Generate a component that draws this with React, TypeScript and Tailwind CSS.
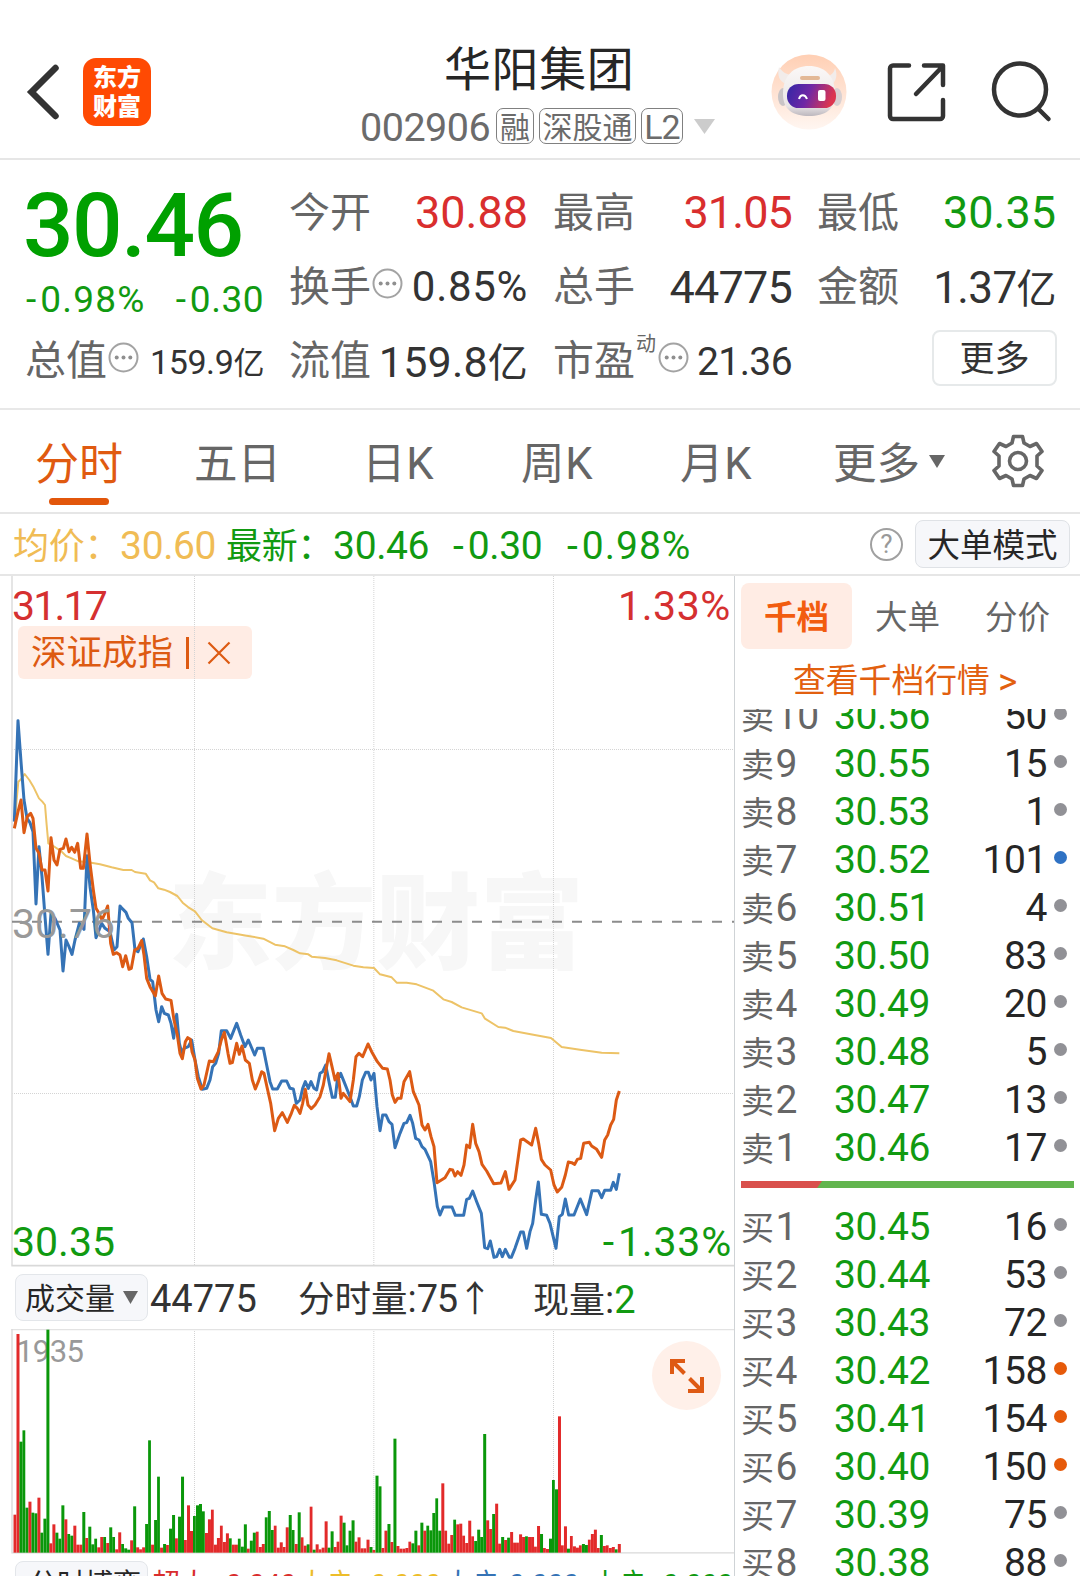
import type { ReactNode } from "react";

// Price traces, in thirds of a pixel. Each one is stored in two spans with their own origin.
const AVG_OPEN =
  "45,400 50,330 55,275 63,268 74,252 88,270 100,290 117,325 127,335 135,345 140,405 145,460 160,468 185,485 198,498 215,505 235,514 265,517 300,523 335,532 370,540 395,540 405,546 437,551 450,571 462,577 475,595 492,599 510,606 532,618 548,638 565,652 585,664 605,690 637,715 680,727 740,737 790,746 825,764 855,769 880,780";
const AVG_REST =
  "0,220 25,223 35,230 75,234 110,241 160,257 190,262 222,264 240,283 275,292 290,308 320,308 350,313 400,332 430,358 455,366 485,382 545,400 555,416 595,441 615,443 640,453 700,464 753,474 785,501 840,509 905,518 958,520";
const STOCK_OPEN =
  "43,395 54,92 63,215 72,330 81,385 90,398 99,425 108,642 117,470 126,560 135,680 144,793 153,670 165,685 180,720 189,843 198,750 207,770 216,793 225,750 238,700 252,718 261,497 270,590 280,660 288,743 305,700 315,715 330,725 342,780 351,770 360,648 367,656 378,667 385,685 396,698 405,780 414,785 430,747 440,800 450,868 458,875 468,960 476,995 485,950 493,970 505,975 513,1000 521,1045 530,973 538,1060 547,1095 552,1075 565,1070 575,1050 585,1110 595,1160 607,1198 620,1195 630,1170 638,1130 647,1120 656,1090 664,1022 680,1022 692,1045 700,1025 710,1000 722,1035 735,1070 745,1050 764,1095 772,1075 790,1075 800,1125 810,1175 818,1197 832,1197 845,1173 860,1173 870,1195 880,1197 889,1240";
const STOCK_REST =
  "0,660 8,625 16,605 25,625 33,605 42,625 50,630 60,580 68,575 77,555 88,610 97,652 106,652 112,600 122,580 132,605 142,630 150,650 160,678 170,678 178,650 187,600 197,577 205,577 213,600 222,580 231,680 240,752 248,705 258,705 267,725 276,733 285,803 300,760 312,730 320,728 330,706 338,730 347,775 357,780 366,800 375,808 392,845 402,905 412,980 420,1005 430,981 456,981 466,1006 491,1006 500,958 508,955 518,933 530,965 544,1000 554,1103 563,1106 571,1083 582,1132 590,1130 599,1108 607,1130 616,1108 628,1132 634,1132 645,1105 662,1056 670,1056 680,1105 690,1055 698,1030 707,960 715,906 724,1003 740,1006 750,1030 768,1105 778,1010 787,1003 796,957 806,1005 822,1005 841,957 860,1004 876,932 895,932 905,953 914,931 932,931 940,907 949,928 958,880";
const INDEX_OPEN =
  "43,415 54,365 63,330 72,428 82,380 92,370 99,385 108,475 117,490 126,540 135,540 144,603 153,443 162,510 171,525 180,478 190,475 198,447 207,485 215,472 224,487 233,460 242,535 250,535 261,432 270,520 280,600 288,655 297,670 306,690 314,672 323,648 332,760 340,793 350,788 360,795 368,830 377,797 387,838 394,835 404,780 414,775 425,752 432,795 440,865 450,890 466,918 476,858 486,910 497,927 513,931 522,990 532,1035 540,1090 547,1106 556,1055 563,1043 571,1048 576,1085 585,1110 592,1165 603,1197 612,1185 628,1113 640,1115 655,1085 664,1050 673,1027 684,1090 690,1120 697,1118 710,1060 718,1093 726,1068 736,1110 748,1120 757,1170 766,1197 775,1175 785,1145 792,1150 803,1200 812,1240 824,1322 835,1285 847,1268 862,1297 874,1270 883,1246 892,1255";
const INDEX_REST =
  "0,700 8,670 16,628 24,675 34,686 45,675 60,650 70,615 78,570 87,521 96,560 105,600 114,580 123,655 130,640 150,665 160,600 168,530 177,520 188,530 204,492 215,515 232,545 248,565 262,567 270,600 277,645 285,667 293,655 303,655 312,605 329,575 340,635 357,675 366,735 375,750 384,733 393,770 402,800 411,908 435,893 450,868 458,870 465,888 473,875 483,886 492,855 500,795 509,803 518,733 527,790 537,815 546,853 560,873 581,911 603,909 616,875 627,928 645,900 655,830 662,780 670,777 695,795 707,745 716,790 724,838 735,855 752,870 762,915 772,936 785,922 796,885 805,846 815,848 824,853 832,838 842,835 851,790 868,787 875,798 890,808 905,832 914,780 923,765 932,735 941,718 949,660 958,633";

// One entry a minute: direction, then the top edge of the bar.
const VOLUME =
  "r764 r222 g545 g511 g743 r725 g758 g760 r713 g818 g776 g209 r850 r793 g818 g836 g736 r778 g822 g827 r797 r854 r854 g756 r834 g800 g853 g836 r862 r831 g831 r849 g802 g831 r868 r817 g852 g865 g869 r841 g739 r862 r868 r862 g792 g541 r854 g780 g650 r863 g852 r855 g806 g765 r835 g770 g650 r840 r736 r813 g768 g736 g732 g754 r819 r778 r749 r854 r834 r797 r846 r820 g835 r854 r854 g836 g860 g793 r866 g842 g818 r815 r861 r852 g772 g753 g810 r797 r863 r847 r861 r802 g765 g810 r852 g757 r832 r857 g853 r740 g869 r853 r868 r863 r784 g863 g814 r861 r845 r767 g788 g856 g812 g781 r845 r832 r865 r865 r839 g861 r870 g647 g679 r864 r812 g792 r846 g536 r858 r866 r866 r864 r845 g850 g812 r856 g788 r812 g797 g811 g759 g715 g812 r670 r812 r851 r825 g779 r793 r791 r827 r849 r782 r829 g843 g809 g831 g522 r781 r807 g762 r731 r851 g831 r840 g833 r816 r848 r848 r823 r831 g829 r831 r831 r860 r798 g822 r864 r867 g836 g660 g688 r469 r856 r799 g866 r828 r859 r863 r856 g852 g855 r839 r822 r809 r864 g825 r858 r856 r864 r861 g868 r852".split(
    " ",
  );

const ASKS: [string, string, number][] = [
  ["10", "30.56", 50],
  ["9", "30.55", 15],
  ["8", "30.53", 1],
  ["7", "30.52", 101],
  ["6", "30.51", 4],
  ["5", "30.50", 83],
  ["4", "30.49", 20],
  ["3", "30.48", 5],
  ["2", "30.47", 13],
  ["1", "30.46", 17],
];

const BIDS: [string, string, number][] = [
  ["1", "30.45", 16],
  ["2", "30.44", 53],
  ["3", "30.43", 72],
  ["4", "30.42", 158],
  ["5", "30.41", 154],
  ["6", "30.40", 150],
  ["7", "30.39", 75],
  ["8", "30.38", 88],
];

function shift(points: string, dx: number, dy: number) {
  return points
    .split(" ")
    .map((p) => {
      const [x, y] = p.split(",").map(Number);
      return `${x + dx},${y + dy}`;
    })
    .join(" ");
}

const trace = (open: string, rest: string) =>
  `${shift(open, 0, 342)} ${shift(rest, 900, 912)}`;

function dotColor(qty: number) {
  if (qty >= 150) return "bg-[#e65a0a]";
  if (qty > 100) return "bg-[#2f72c4]";
  return "bg-[#919196]";
}

function Dots() {
  return (
    <svg className="size-[31px] shrink-0" viewBox="0 0 31 31" fill="none">
      <circle cx="15.5" cy="15.5" r="14" stroke="#a3a3a3" strokeWidth="2" />
      <g fill="#8f8f8f">
        <circle cx="8.7" cy="15.5" r="2" />
        <circle cx="15.5" cy="15.5" r="2" />
        <circle cx="22.3" cy="15.5" r="2" />
      </g>
    </svg>
  );
}

function Caret({ className }: { className: string }) {
  return (
    <svg className={className} viewBox="0 0 20 16" preserveAspectRatio="none">
      <path d="M0 0h20L10 16z" fill="currentColor" />
    </svg>
  );
}

// Negative figure with a little air after the sign.
function Minus({ children }: { children: ReactNode }) {
  return (
    <>
      <span className="tracking-[4px]">-</span>
      {children}
    </>
  );
}

function Stat({ label, children }: { label: ReactNode; children: ReactNode }) {
  return (
    <div className="flex h-[74px] items-center justify-between whitespace-nowrap">
      <span className="-ml-px flex items-center pt-[3px] text-[41px] text-[#666]">{label}</span>
      {children}
    </div>
  );
}

function Header() {
  return (
    <header className="flex h-[160px] shrink-0 border-b-2 border-[#e6e6e6] pl-[26px]">
      <svg className="mt-[62px] h-[60px] w-[34px]" viewBox="0 0 34 60" fill="none">
        <path d="M29.500 6L5.500 30l24 24" stroke="#333" strokeWidth="6.500" strokeLinecap="round" />
      </svg>
      <div className="mt-[58px] ml-[23px] flex h-[68px] w-[68px] flex-col items-center justify-center gap-[5px] rounded-[13px] bg-[#ff4a03] pt-px text-[24px] leading-[24px] font-black text-white">
        <span>东方</span>
        <span>财富</span>
      </div>
      <div className="ml-[209px] w-[358px] pt-[45px]">
        <h1 className="pl-[84px] text-[47px] leading-[50px] tracking-[0.6px] text-[#262626]">华阳集团</h1>
        <div className="mt-[13px] flex h-[36px] items-center text-[#6b6b6b]">
          <span className="w-[136px] pt-[3px] text-[39.500px] tracking-[-0.5px]">002906</span>
          <span className="flex h-[36px] w-[38px] items-center justify-center rounded-[7px] border border-[#808080] pt-[3px] text-[30px]">融</span>
          <span className="ml-[5px] flex h-[36px] w-[97px] items-center justify-center rounded-[7px] border border-[#808080] pt-[3px] text-[30px]">深股通</span>
          <span className="ml-[5px] flex h-[36px] w-[42px] items-center justify-center rounded-[7px] border border-[#808080] pt-[2px] text-[34px] tracking-[-1px]">L2</span>
          <Caret className="ml-[11px] h-[15px] w-[21px] text-[#ccc]" />
        </div>
      </div>
      <svg className="mt-[54px] ml-[53px] size-[76px]" viewBox="0 0 76 76">
        <defs>
          <linearGradient id="halo" x1="0" y1="0" x2="0" y2="1">
            <stop offset="0" stopColor="#ffcfb4" />
            <stop offset="1" stopColor="#fff6f1" />
          </linearGradient>
          <linearGradient id="visor" x1="0" y1="0" x2="1" y2="0.2">
            <stop offset="0" stopColor="#3227a6" />
            <stop offset="0.5" stopColor="#6f27a5" />
            <stop offset="1" stopColor="#dc3550" />
          </linearGradient>
          <linearGradient id="shell" x1="0" y1="0" x2="0" y2="1">
            <stop offset="0" stopColor="#fbf8f7" />
            <stop offset="0.8" stopColor="#e9e5e6" />
            <stop offset="1" stopColor="#bdb8be" />
          </linearGradient>
        </defs>
        <circle cx="38" cy="38" r="37.500" fill="url(#halo)" />
        <path d="M8 13c-2 8 0 14 7 17l7-9c-6 0-11-3-14-8zM64 14c3 7 1 14-4 17l-6-8c6-1 9-4 10-9z" fill="#f2ecea" />
        <ellipse cx="12" cy="43" rx="5" ry="9" fill="#c9c4c6" />
        <ellipse cx="66" cy="43" rx="5" ry="9" fill="#d8d0d2" />
        <path d="M12 40C12 21 23 12 38 12s26 9 26 28c0 16-10 22-26 22S12 56 12 40z" fill="url(#shell)" />
        <rect x="16" y="30" width="49" height="24" rx="11.500" fill="url(#visor)" />
        <rect x="29" y="22" width="20" height="4" rx="2" fill="#e3b896" />
        <path d="M28 45c1.500-5 6-5 8 0" fill="none" stroke="#fff" strokeWidth="2" />
        <rect x="47" y="36" width="7.500" height="11" rx="2" fill="#fff" />
      </svg>
      <svg className="mt-[61px] ml-[39px] size-[62px]" viewBox="0 0 62 62" fill="none" stroke="#333" strokeWidth="4.500" strokeLinecap="round" strokeLinejoin="round">
        <path d="M23 4.500H7a3 3 0 0 0-3 3V55a3 3 0 0 0 3 3h47a3 3 0 0 0 3-3V39" />
        <path d="M38 4.500h19V24M56 6L30 33" />
      </svg>
      <svg className="mt-[60px] ml-[41px] size-[64px]" viewBox="0 0 64 64" fill="none" stroke="#333" strokeWidth="4.500" strokeLinecap="round">
        <circle cx="31" cy="29.500" r="26" />
        <path d="M49.500 49l10 10" />
      </svg>
    </header>
  );
}

function Quote() {
  return (
    <section className="grid h-[250px] shrink-0 grid-cols-4 content-start gap-x-[26px] border-b-2 border-[#e8e8e8] pt-[15px] pr-[24px] pl-[26px]">
      <div className="row-span-2 pt-[14px] text-[#119a11]">
        <div className="-ml-[3px] text-[89px] leading-[74px] font-medium tracking-[-1.500px] text-[#00a000]">30.46</div>
        <div className="mt-[17px] flex justify-between text-[37px] leading-[40px] tracking-[0.5px]">
          <span className="tracking-[1.200px]"><Minus>0.98%</Minus></span>
          <span><Minus>0.30</Minus></span>
        </div>
      </div>
      <Stat label="今开">
        <span className="text-[45px] text-[#d92e2e]">30.88</span>
      </Stat>
      <Stat label="最高">
        <span className="text-[45px] tracking-[-0.9px] text-[#d92e2e]">31.05</span>
      </Stat>
      <Stat label="最低">
        <span className="text-[45px] text-[#119a11]">30.35</span>
      </Stat>
      <Stat label={<>换手<span className="ml-px -mt-[9px]"><Dots /></span></>}>
        <span className="pt-[2px] text-[42px] tracking-[0.7px]">0.85%</span>
      </Stat>
      <Stat label="总手">
        <span className="pt-[2px] text-[45px] tracking-[-0.8px]">44775</span>
      </Stat>
      <Stat label="金额">
        <span className="pt-[3px] text-[44px] tracking-[-0.6px]">1.37<span className="text-[40px]">亿</span></span>
      </Stat>
      <Stat label={<>总值<span className="ml-px -mt-[9px]"><Dots /></span></>}>
        <span className="pt-[3px] text-[34px] tracking-[-0.4px]">159.9<span className="text-[31px]">亿</span></span>
      </Stat>
      <Stat label="流值">
        <span className="pt-[4px] text-[43px] tracking-[0.2px]">159.8<span className="text-[40px]">亿</span></span>
      </Stat>
      <Stat
        label={
          <>
            市盈
            <span className="-mt-[36px] ml-px text-[20px]">动</span>
            <span className="ml-[2px] -mt-[9px]"><Dots /></span>
          </>
        }
      >
        <span className="pt-[4px] text-[39px] tracking-[-0.6px]">21.36</span>
      </Stat>
      <div className="flex h-[74px] items-center justify-end">
        <button className="-mr-px mb-[4px] h-[56px] w-[125px] rounded-[8px] border-2 border-[#e6e9ea] pt-[3px] text-[35px]">更多</button>
      </div>
    </section>
  );
}

function PeriodTabs() {
  return (
    <nav className="flex h-[104px] shrink-0 items-center border-b-2 border-[#e6e6e6] pl-[35px] text-[43.500px] text-[#666]">
      <span className="relative w-[159px] pt-[7px] text-[44px] text-[#e05a10]">
        分时
        <i className="absolute top-[62px] left-[14px] h-[7px] w-[60px] rounded-full bg-[#e2560b]" />
      </span>
      <span className="w-[168px] pt-[7px]">五日</span>
      <span className="w-[159px] pt-[7px] tracking-[0.8px]">日K</span>
      <span className="w-[159px] pt-[7px] tracking-[0.8px]">周K</span>
      <span className="w-[153px] pt-[7px] tracking-[0.8px]">月K</span>
      <span className="w-[96px] pt-[7px]">更多</span>
      <Caret className="h-[13px] w-[16px] text-[#666]" />
      <svg className="ml-[45px] size-[56px]" viewBox="0 0 56 56" fill="none" stroke="#666" strokeWidth="3.600" strokeLinejoin="round">
        <path d="M23.500 3.500h9l1.500 6.500 6 3.500 6.500-3 5.500 8-5 4.500v10l5 4.500-5.500 8-6.500-3-6 3.500-1.500 6.500h-9L22 46l-6-3.500-6.500 3-5.500-8L9 33V23l-5-4.500 5.500-8 6.500 3L22 10z" />
        <circle cx="28" cy="28" r="8.500" />
      </svg>
    </nav>
  );
}

function LatestBar() {
  return (
    <div className="flex h-[62px] shrink-0 items-center border-b-2 border-[#e6e6e6] pl-[13px] text-[39px] tracking-[-0.4px] whitespace-pre text-[#119a11]">
      <span className="w-[213px] pt-[4px] text-[#f0bc55]"><span className="text-[36px] tracking-[-0.3px]">均价：</span>30.60</span>
      <span className="w-[227px] pt-[4px]"><span className="text-[36px] tracking-[-0.3px]">最新：</span>30.46</span>
      <span className="w-[114px] pt-[4px]"><Minus>0.30</Minus></span>
      <span className="pt-[4px] tracking-[1px]"><Minus>0.98%</Minus></span>
      <span className="mr-[12px] ml-auto flex size-[33px] items-center justify-center rounded-full border-2 border-[#a0a0a0] text-[26px] tracking-normal text-[#999]">?</span>
      <button className="mr-[10px] h-[48px] w-[155px] rounded-[8px] border border-[#dfe2e6] bg-[#f6f7fa] pt-[4px] text-[32.500px] tracking-normal text-[#262626]">大单模式</button>
    </div>
  );
}

function PriceChart() {
  return (
    <div className="relative h-[690px]">
      <div className="absolute top-[50px] left-[18px] flex h-[53px] w-[234px] items-center rounded-[6px] bg-[#ffece4] pl-[13px] text-[35.500px] text-[#dd5a12]">
        <span className="pt-[3px]">深证成指</span>
        <i className="ml-[13px] h-[32px] w-[3px] bg-[#dd5a12]" />
        <svg className="ml-[18px] size-[24px]" viewBox="0 0 24 24" stroke="currentColor" strokeWidth="2.200">
          <path d="M1.500 1.500l21 21M22.500 1.500l-21 21" />
        </svg>
      </div>
      <div className="absolute top-[290px] left-[168px] text-[104px] leading-[120px] font-black whitespace-nowrap text-[#f7f7f7]">东方财富</div>
      <svg className="absolute inset-0 h-[691px] w-[734px]" viewBox="0 0 2202 2073" fill="none">
        <g stroke="#d4d4d4" strokeWidth="3" strokeDasharray="3 3">
          <path d="M583.500 0V2068M1121.500 0V2068M1660.500 0V2068" />
          <path d="M36 520.500H2202M36 1552.500H2202" />
        </g>
        <path d="M36 0V2068" stroke="#e0e0e0" strokeWidth="5" />
        <path d="M34 2069H2202" stroke="#d9d9d9" strokeWidth="5" />
        <path d="M36 1037H2202" stroke="#8c8c8c" strokeWidth="6" strokeDasharray="30 30" />
        <g strokeLinejoin="round">
          <polyline points={trace(AVG_OPEN, AVG_REST)} stroke="#edc367" strokeWidth="6" />
          <polyline points={trace(STOCK_OPEN, STOCK_REST)} stroke="#3573b6" strokeWidth="9" />
          <polyline points={trace(INDEX_OPEN, INDEX_REST)} stroke="#dc5a14" strokeWidth="9" />
        </g>
      </svg>
      <div className="absolute inset-x-0 top-[9px] flex justify-between pr-[3px] pl-[12px] text-[41px] leading-[42px] text-[#d53030]">
        <span className="tracking-[-1.800px]">31.17</span>
        <span className="tracking-[0.6px]">1.33%</span>
      </div>
      <div className="absolute top-[327px] left-[12px] text-[41px] leading-[42px] text-[#999]">30.76</div>
      <div className="absolute inset-x-0 top-[645px] flex justify-between pr-[2px] pl-[12px] text-[41px] leading-[42px] text-[#119a11]">
        <span>30.35</span>
        <span className="tracking-[0.8px]"><Minus>1.33%</Minus></span>
      </div>
    </div>
  );
}

function VolumeChart() {
  return (
    <div className="relative h-[225px]">
      <div className="absolute top-[7px] left-[16px] text-[31px] leading-[31px] tracking-[-0.6px] text-[#999]">1935</div>
      <svg className="absolute inset-0 h-[225px] w-[734px]" viewBox="0 207 2202 675">
        <path d="M583.500 207V878M1121.500 207V878M1660.500 207V878" stroke="#d4d4d4" strokeWidth="3" strokeDasharray="3 3" />
        <path d="M34 208.500H2202" stroke="#e3e3e3" strokeWidth="4" />
        <path d="M36 207V878M34 878.500H2202" stroke="#d9d9d9" strokeWidth="4" />
        {VOLUME.map((bar, i) => {
          const top = Number(bar.slice(1));
          return (
            <rect
              key={i}
              x={40.5 + i * 8.975}
              y={top}
              width={i % 3 ? 9 : 8.4}
              height={878 - top}
              fill={bar[0] === "r" ? "#e22a2a" : "#0a970a"}
            />
          );
        })}
      </svg>
      <div className="absolute top-[12px] right-[13px] size-[69px] rounded-full bg-[#fff0e9]">
        <svg viewBox="0 0 69 69" fill="none" stroke="#de5a14" strokeWidth="4">
          <path d="M33 20H20v13M20 20l12.500 12.500M50 36v14H36M50 50L37.500 37.500" />
        </svg>
      </div>
    </div>
  );
}

function VolumeBar() {
  return (
    <div className="flex h-[63px] items-center pl-[15px] text-[38px] whitespace-nowrap text-[#333]">
      <div className="flex h-[47px] w-[133px] items-center rounded-[8px] border border-[#e3e6ea] bg-[#f6f7fa] pl-[9px] text-[30px] text-[#262626]">
        <span className="pt-[3px]">成交量</span>
        <Caret className="ml-[8px] h-[13px] w-[15px] text-[#666]" />
      </div>
      <span className="ml-[2px] w-[148px] pt-[2px]">44775</span>
      <span className="w-[235px] pt-[4px]"><span className="text-[36.500px]">分时量</span>:<span className="tracking-[-1.200px]">75</span><span className="text-[36px]">↑</span></span>
      <span className="pt-[4px]"><span className="text-[36px]">现量</span>:<span className="text-[#119a11]">2</span></span>
    </div>
  );
}

function FlowBar() {
  return (
    <div className="mt-[7px] ml-[15px] flex h-[47px] shrink-0 items-center text-[28px] whitespace-nowrap">
      <div className="flex h-[47px] w-[133px] shrink-0 items-center rounded-[8px] border border-[#e3e6ea] bg-[#f6f7fa] pl-[13px] text-[28px] text-[#262626]">
        分时博弈
      </div>
      <span className="ml-[4px] flex w-[146px] text-[#d92e2e]"><span className="w-[74px]">超大:</span>0.040</span>
      <span className="flex w-[146px] text-[#edbd2a]"><span className="w-[73px]">大户:</span>0.000</span>
      <span className="flex w-[147px] text-[#3573b6]"><span className="w-[65px]">大户:</span>0.000</span>
      <span className="flex text-[#119a11]"><span className="w-[72px]">小户:</span>0.000</span>
    </div>
  );
}

function BookRow({ side, row }: { side: string; row: [string, string, number] }) {
  const [level, price, qty] = row;
  return (
    <div className="flex h-[48px] shrink-0 items-center text-[39px] tracking-[-0.4px]">
      <span className="w-[82px] whitespace-nowrap text-[#666]"><span className="mr-[2px] text-[33px]">{side}</span>{level}</span>
      <span className="w-[107px] text-right text-[#119a11]">{price}</span>
      <span className="ml-auto text-[#262626]">{qty}</span>
      <i className={`mr-[13px] mb-[6px] ml-[7px] size-[13px] rounded-full ${dotColor(qty)}`} />
    </div>
  );
}

function OrderBook() {
  return (
    <aside className="flex min-h-0 flex-1 flex-col overflow-hidden pt-[7px] pl-[6px]">
      <div className="flex h-[66px] shrink-0 items-center text-[32.500px] text-[#666]">
        <span className="flex h-[66px] w-[111px] items-center justify-center rounded-[8px] bg-[#ffece4] pt-[5px] font-bold text-[#f25c0f]">千档</span>
        <span className="ml-[23px] pt-[5px]">大单</span>
        <span className="ml-[45px] pt-[5px]">分价</span>
      </div>
      <div className="flex h-[60px] shrink-0 items-center pt-[5px] pl-[52px] text-[32.800px] whitespace-pre text-[#e2600f]">查看千档行情 <span className="text-[37px]">&gt;</span></div>
      <div className="flex h-[463px] shrink-0 flex-col justify-end overflow-hidden">
        {ASKS.map((row) => (
          <BookRow key={row[0]} side="卖" row={row} />
        ))}
      </div>
      <div className="mt-[9px] mr-[6px] flex h-[7px] shrink-0 bg-[#62b54e]">
        <i className="h-full w-[81px] bg-[#d9504c] [clip-path:polygon(0_0,100%_0,94%_100%,0_100%)]" />
      </div>
      <div className="mt-[15px] flex flex-col">
        {BIDS.map((row) => (
          <BookRow key={row[0]} side="买" row={row} />
        ))}
      </div>
    </aside>
  );
}

export default function App() {
  return (
    <div className="flex h-[1576px] w-[1080px] flex-col overflow-hidden bg-white font-['Roboto','Noto_Sans_CJK_SC',sans-serif] leading-none text-[#333]">
      <Header />
      <Quote />
      <PeriodTabs />
      <LatestBar />
      <main className="flex min-h-0 flex-1">
        <div className="w-[735px] shrink-0 overflow-hidden border-r border-[#cfd3d6]">
          <PriceChart />
          <VolumeBar />
          <VolumeChart />
          <FlowBar />
        </div>
        <OrderBook />
      </main>
    </div>
  );
}
